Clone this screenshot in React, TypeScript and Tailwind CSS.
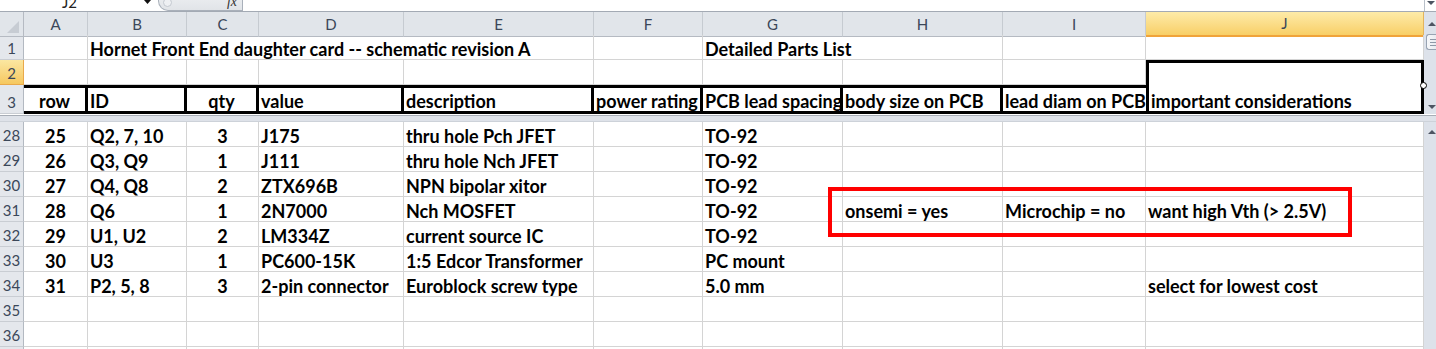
import React from 'react';

const GRID =
  'grid w-[1424px] grid-cols-[24px_64px_99px_72px_145px_190px_109px_140px_160px_143px_278px]';

const COLS = ['A', 'B', 'C', 'D', 'E', 'F', 'G', 'H', 'I', 'J'];

const headings = [
  'row',
  'ID',
  'qty',
  'value',
  'description',
  'power rating',
  'PCB lead spacing',
  'body size on PCB',
  'lead diam on PCB',
  'important considerations',
];

const E = ['', '', '', '', '', '', '', '', '', ''];

// row 37 only shows its top 2px, so it gets no label
const body: [number | '', string[]][] = [
  [28, ['25', 'Q2, 7, 10', '3', 'J175', 'thru hole Pch JFET', '', 'TO-92', '', '', '']],
  [29, ['26', 'Q3, Q9', '1', 'J111', 'thru hole Nch JFET', '', 'TO-92', '', '', '']],
  [30, ['27', 'Q4, Q8', '2', 'ZTX696B', 'NPN bipolar xitor', '', 'TO-92', '', '', '']],
  [
    31,
    ['28', 'Q6', '1', '2N7000', 'Nch MOSFET', '', 'TO-92', 'onsemi = yes', 'Microchip = no', 'want high Vth (> 2.5V)'],
  ],
  [32, ['29', 'U1, U2', '2', 'LM334Z', 'current source IC', '', 'TO-92', '', '', '']],
  [33, ['30', 'U3', '1', 'PC600-15K', '1:5 Edcor Transformer', '', 'PC mount', '', '', '']],
  [34, ['31', 'P2, 5, 8', '3', '2-pin connector', 'Euroblock screw type', '', '5.0 mm', '', '', 'select for lowest cost']],
  [35, E],
  [36, E],
  ['', E],
];

const centered = (i: number) => i === 0 || i === 2;

const UpArrow = () => (
  <svg width="8" height="4" viewBox="0 0 8 4">
    <path d="M4 0L8 4H0z" fill="#4e5562" />
  </svg>
);

const DownArrow = () => (
  <svg width="8" height="4" viewBox="0 0 8 4">
    <path d="M0 0h8L4 4z" fill="#4e5562" />
  </svg>
);

function RowHead({ n, selected = false }: { n: number | ''; selected?: boolean }) {
  return (
    <div
      className={`flex items-end justify-center pb-[2px] text-[15px] leading-[18px] text-[#3b4759] border-r border-b ${
        selected
          ? 'bg-gradient-to-b from-[#fbe7a1] to-[#f6c85f] border-b-[#e9a94b] border-r-[#e9a94b]'
          : 'bg-[#e4e7ec] border-b-[#c9cdd3] border-r-[#b3b9c1]'
      }`}
    >
      {n}
    </div>
  );
}

function Cell({
  children,
  center = false,
  className = 'border-r border-b border-[#d4d4d4]',
}: {
  children?: React.ReactNode;
  center?: boolean;
  className?: string;
}) {
  return (
    <div
      className={`flex items-end whitespace-nowrap font-bold text-[18px] leading-[20px] text-black ${
        center ? 'justify-center' : 'pl-[2px]'
      } ${className}`}
    >
      {children}
    </div>
  );
}

export default function App() {
  return (
    <div className="relative w-[1436px] h-[349px] overflow-hidden bg-white font-['Lato',sans-serif]">
      {/* formula bar, cut off at the top */}
      <div className="flex h-[11px] overflow-hidden bg-white">
        <div className="flex w-[158px] h-[22px] -mt-[9px] items-center text-[15px] text-[#222]">
          <span className="pl-[62px]">J2</span>
          <span className="ml-auto mr-[7px] flex">
            <svg width="7" height="4" viewBox="0 0 7 4">
              <path d="M0 0h7L3.5 4z" fill="#111" />
            </svg>
          </span>
        </div>
        <div className="flex w-[85px] h-[22px] -mt-[11px] items-center rounded-bl-[10px] border-b border-l border-r border-[#a9b0ba] bg-gradient-to-b from-[#f1f3f5] to-[#e1e4e8]">
          <span className="ml-[4px] mt-[6px] w-[9px] h-[9px] rounded-full border border-[#c4c9d0] bg-[#eef0f3]" />
          <span className="ml-auto mr-[5px] mt-[4px] italic font-['Liberation_Serif',serif] text-[14px] text-[#333]">
            fx
          </span>
        </div>
        <div className="flex-1" />
        <div className="flex w-[12px] justify-center border-l border-[#b9c0c9] pt-[1px]">
          <DownArrow />
        </div>
      </div>
      <div className="h-[1px] bg-[#a3aab4]" />

      {/* top pane */}
      <div className="flex">
        <div className="flex flex-col">
          {/* column headers */}
          <div className={`${GRID} h-[23px]`}>
            <div className="relative border-r border-b border-[#b5bac2] bg-[#e1e5ea]">
              <svg className="absolute right-[4px] bottom-[3px]" width="12" height="12" viewBox="0 0 12 12">
                <path d="M12 0V12H0z" fill="#c7ccd3" />
              </svg>
            </div>
            {COLS.map((c) =>
              c === 'J' ? (
                <div
                  key={c}
                  className="flex items-center justify-center border-b-2 border-r border-b-[#f0a33a] border-r-[#e3b45c] bg-gradient-to-b from-[#fdeba8] to-[#f8cf66] text-[15px] text-[#3b4759]"
                >
                  {c}
                </div>
              ) : (
                <div
                  key={c}
                  className="flex items-center justify-center border-r border-b border-r-[#c6cbd1] border-b-[#b5bac2] bg-[#e1e5ea] text-[15px] text-[#3b4759]"
                >
                  {c}
                </div>
              )
            )}
          </div>

          {/* row 1 */}
          <div className={`${GRID} h-[25px]`}>
            <RowHead n={1} />
            <Cell />
            <Cell className="col-span-4 border-r border-b border-[#d4d4d4]">
              Hornet Front End daughter card -- schematic revision A
            </Cell>
            <Cell />
            <Cell className="col-span-2 border-r border-b border-[#d4d4d4]">Detailed Parts List</Cell>
            <Cell />
            <Cell />
          </div>

          {/* row 2 */}
          <div className={`${GRID} h-[25px]`}>
            <RowHead n={2} selected />
            {COLS.slice(0, 9).map((c) => (
              <Cell key={c} />
            ))}
            <Cell className="relative border-t-[3px] border-l-[3px] border-r-[3px] border-black" />
          </div>

          {/* row 3 */}
          <div className={`${GRID} h-[29px]`}>
            <RowHead n={3} />
            {headings.map((h, i) =>
              i === 9 ? (
                <Cell key={h} className="relative border-l-[3px] border-r-[3px] border-b-[3px] border-black">
                  {h}
                  <span className="absolute -right-[6px] -top-[3px] w-[7px] h-[7px] rounded-full border border-black bg-white" />
                </Cell>
              ) : i === 8 ? (
                <Cell key={h} className="border-t-[3px] border-b-[3px] border-black">
                  {h}
                </Cell>
              ) : (
                <Cell
                  key={h}
                  center={centered(i)}
                  className="border-t-[3px] border-b-[3px] border-r-[3px] border-black"
                >
                  {h}
                </Cell>
              )
            )}
          </div>
        </div>

        {/* upper scrollbar */}
        <div className="flex w-[12px] flex-col bg-[#dde2ea]">
          <div className="flex h-[22px] items-center pl-[4px] pt-[1px]">
            <UpArrow />
          </div>
          <div className="ml-[2px] flex h-[16px] flex-col justify-center gap-[2px] rounded-l-[3px] border border-r-0 border-[#98a3b2] bg-gradient-to-r from-[#f7f8fa] to-[#e9ecf1] pl-[3px]">
            <div className="h-[1px] bg-[#8e99a8]" />
            <div className="h-[1px] bg-[#8e99a8]" />
            <div className="h-[1px] bg-[#8e99a8]" />
          </div>
          <div className="flex-1" />
          <div className="flex h-[14px] items-center pl-[4px]">
            <DownArrow />
          </div>
        </div>
      </div>

      {/* split bar */}
      <div className="flex h-[8px] flex-col">
        <div className="h-[1px] bg-white" />
        <div className="h-[1px] bg-[#a7adb6]" />
        <div className="h-[5px] bg-[#dee2e9]" />
        <div className="h-[1px] bg-[#cdd2d9]" />
      </div>

      {/* lower pane */}
      <div className="flex">
        <div className="flex flex-col">
          {body.map(([n, cells], r) => (
            <div key={r} className={`${GRID} h-[25px]`}>
              <RowHead n={n} />
              {cells.map((v, i) => (
                <Cell key={i} center={centered(i)}>
                  {v}
                </Cell>
              ))}
            </div>
          ))}
        </div>
        <div className="flex w-[12px] flex-col bg-[#dde2ea]">
          <div className="flex h-[20px] items-center pl-[4px]">
            <UpArrow />
          </div>
        </div>
      </div>

      {/* highlight drawn over the sheet */}
      <div className="pointer-events-none absolute left-[828px] top-[187px] h-[50px] w-[524px] border-4 border-[#ff0000]" />
    </div>
  );
}
